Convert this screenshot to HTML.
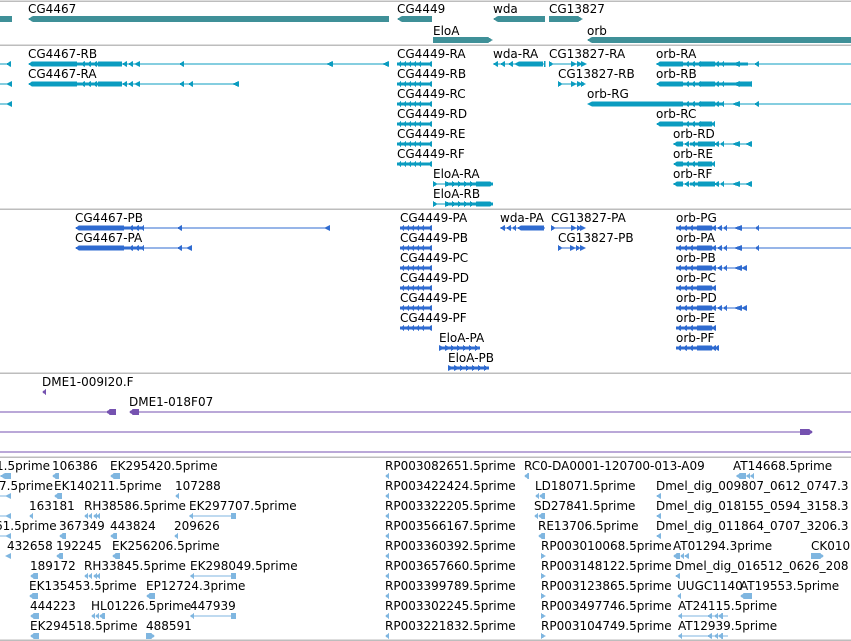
<!DOCTYPE html>
<html><head><meta charset="utf-8"><style>
html,body{margin:0;padding:0;background:#fff;width:851px;height:641px;overflow:hidden}
svg{display:block}
rect,polygon,line{shape-rendering:crispEdges}
text{font-family:"DejaVu Sans","Liberation Sans",sans-serif;font-size:12px;fill:#000}
</style></head><body>
<svg width="851" height="641" viewBox="0 0 851 641" xmlns="http://www.w3.org/2000/svg">
<g stroke="#bdbdbd" stroke-width="1.5">
<line x1="0" y1="1" x2="851" y2="1"/>
<line x1="0" y1="45" x2="851" y2="45"/>
<line x1="0" y1="209" x2="851" y2="209"/>
<line x1="0" y1="373" x2="851" y2="373"/>
<line x1="0" y1="457" x2="851" y2="457"/>
<line x1="0" y1="640" x2="851" y2="640"/>
</g>

<g fill="#3f9098">
<rect x="0" y="16" width="12" height="6"/>
<polygon points="28,19 33,16 389,16 389,22 33,22"/>
<polygon points="397,19 402,16 432,16 432,22 402,22"/>
<polygon points="493,19 498,16 545,16 545,22 498,22"/>
<polygon points="549,16 578,16 583,19 578,22 549,22"/>
<polygon points="433,37 488,37 493,40 488,43 433,43"/>
<polygon points="587,40 592,37 851,37 851,43 592,43"/>
</g>
<text x="28" y="13">CG4467</text>
<text x="397" y="13">CG4449</text>
<text x="493" y="13">wda</text>
<text x="549" y="13">CG13827</text>
<text x="433" y="35">EloA</text>
<text x="587" y="35">orb</text>

<g fill="#0b9cc0" stroke="none">
<rect x="0" y="63.5" width="10" height="1"/><polygon points="6,64 11,61 11,67"/>
<polygon points="28,64 32,61.5 77,61.5 77,66.5 32,66.5"/>
<rect x="77" y="62.5" width="45" height="3"/><rect x="98" y="61.5" width="24" height="5"/>
<polygon points="80,64 85,61 85,67"/><polygon points="86,64 91,61 91,67"/><polygon points="92,64 97,61 97,67"/>
<polygon points="122,64 127,61 127,67"/><polygon points="128,64 133,61 133,67"/><polygon points="134,64 140,61 140,67"/>
<rect x="122" y="63.5" width="267" height="1"/>
<polygon points="179,64 184,61 184,67"/><polygon points="326,64 333,61 333,67"/><polygon points="382,64 389,61 389,67"/>
<rect x="0" y="83.5" width="12" height="1"/><polygon points="6,84 12,81 12,87"/>
<polygon points="28,84 32,81.5 77,81.5 77,86.5 32,86.5"/>
<rect x="77" y="82.5" width="45" height="3"/><rect x="98" y="81.5" width="24" height="5"/>
<polygon points="80,84 85,81 85,87"/><polygon points="86,84 91,81 91,87"/><polygon points="92,84 97,81 97,87"/>
<polygon points="122,84 127,81 127,87"/><polygon points="128,84 133,81 133,87"/><polygon points="134,84 140,81 140,87"/>
<rect x="122" y="83.5" width="116" height="1"/>
<polygon points="179,84 184,81 184,87"/><polygon points="188,84 193,81 193,87"/><polygon points="232,84 239,81 239,87"/>
<rect x="0" y="103.5" width="12" height="1"/><polygon points="6,104 12,101 12,107"/>
</g>
<g fill="#0b9cc0">
<g id="cg49"><rect x="397" y="62.5" width="35" height="3"/>
<polygon points="397,64 401,61 401,67"/><polygon points="402,64 406,61 406,67"/><polygon points="407,64 411,61 411,67"/><polygon points="412,64 416,61 416,67"/><polygon points="417,64 421,61 421,67"/><polygon points="427,64 432,61 432,67"/></g>
<use href="#cg49" y="20"/><use href="#cg49" y="40"/><use href="#cg49" y="60"/><use href="#cg49" y="80"/><use href="#cg49" y="100"/>
<rect x="493" y="63.5" width="52" height="1"/><polygon points="493,64 498,61 498,67"/><polygon points="500,64 505,61 505,67"/><polygon points="508,64 513,61 513,67"/>
<polygon points="514,64 519,61.5 543,61.5 543,66.5 519,66.5"/><rect x="544" y="61" width="1.5" height="6"/>
<rect x="549" y="63.5" width="36" height="1"/><polygon points="549,61 554,64 549,67"/><polygon points="571,61 577,64 571,67"/><polygon points="577,61 583,64 577,67"/><polygon points="581,61 587,64 581,67"/>
<g transform="translate(9,20)"><rect x="549" y="63.5" width="27" height="1"/><polygon points="549,61 554,64 549,67"/><polygon points="562,61 568,64 562,67"/><polygon points="568,61 574,64 568,67"/><polygon points="572,61 577,64 572,67"/></g>
<g id="orbA"><polygon points="656,64 660,61.5 683,61.5 683,66.5 660,66.5"/><rect x="683" y="62.5" width="65" height="3"/>
<rect x="700" y="61.5" width="15" height="5"/>
<polygon points="684,64 689,61 689,67"/><polygon points="690,64 695,61 695,67"/><polygon points="696,64 701,61 701,67"/>
<polygon points="714,64 719,61 719,67"/><polygon points="720,64 724,61 724,67"/><polygon points="731,64 740,61 740,67"/></g>
<rect x="656" y="63.5" width="195" height="1"/><polygon points="754,64 759,61 759,67"/>
<use href="#orbA" y="20"/><polygon points="745,84 752,81 752,87"/><rect x="740" y="81.5" width="12" height="5"/>
<polygon points="587,104 592,101.5 683,101.5 683,106.5 592,106.5"/>
<rect x="683" y="102.5" width="40" height="3"/><rect x="700" y="101.5" width="15" height="5"/>
<polygon points="684,104 689,101 689,107"/><polygon points="690,104 695,101 695,107"/><polygon points="696,104 701,101 701,107"/>
<polygon points="714,104 719,101 719,107"/><polygon points="720,104 724,101 724,107"/><polygon points="731,104 740,101 740,107"/>
<rect x="683" y="103.5" width="168" height="1"/><polygon points="754,104 759,101 759,107"/>
<polygon points="656,124 660,121.5 683,121.5 683,126.5 660,126.5"/><rect x="683" y="122.5" width="32" height="3"/><rect x="700" y="121.5" width="12" height="5"/>
<polygon points="684,124 689,121 689,127"/><polygon points="690,124 695,121 695,127"/><polygon points="696,124 701,121 701,127"/><polygon points="711,124 715,121 715,127"/>
<g id="orbD"><polygon points="673,144 677,141.5 683,141.5 683,146.5 677,146.5"/><rect x="673" y="143.5" width="79" height="1"/>
<polygon points="684,144 689,141 689,147"/><polygon points="690,144 695,141 695,147"/><rect x="690" y="142.5" width="25" height="3"/><rect x="698" y="141.5" width="17" height="5"/>
<polygon points="714,144 719,141 719,147"/><polygon points="720,144 724,141 724,147"/><polygon points="731,144 740,141 740,147"/><polygon points="745,144 752,141 752,147"/></g>
<polygon points="673,164 677,161.5 683,161.5 683,166.5 677,166.5"/><rect x="683" y="162.5" width="32" height="3"/><rect x="698" y="161.5" width="14" height="5"/>
<polygon points="684,164 689,161 689,167"/><polygon points="690,164 695,161 695,167"/><polygon points="711,164 715,161 715,167"/>
<use href="#orbD" y="40"/>
<g id="eloA"><rect x="433" y="183.5" width="60" height="1"/><polygon points="433,181 438,184 433,187"/><rect x="445" y="182.5" width="48" height="3"/>
<polygon points="445,181 452,184 445,187"/><polygon points="452,181 457,184 452,187"/><polygon points="458,181 463,184 458,187"/><polygon points="464,181 469,184 464,187"/><polygon points="470,181 475,184 470,187"/><polygon points="476,181.5 490,181.5 493,184 490,186.5 476,186.5"/></g>
<use href="#eloA" y="20"/>
</g>
<text x="28" y="58">CG4467-RB</text>
<text x="28" y="78">CG4467-RA</text>
<text x="397" y="58">CG4449-RA</text><text x="397" y="78">CG4449-RB</text><text x="397" y="98">CG4449-RC</text>
<text x="397" y="118">CG4449-RD</text><text x="397" y="138">CG4449-RE</text><text x="397" y="158">CG4449-RF</text>
<text x="433" y="178">EloA-RA</text><text x="433" y="198">EloA-RB</text>
<text x="493" y="58">wda-RA</text>
<text x="549" y="58">CG13827-RA</text><text x="558" y="78">CG13827-RB</text>
<text x="656" y="58">orb-RA</text><text x="656" y="78">orb-RB</text><text x="587" y="98">orb-RG</text>
<text x="656" y="118">orb-RC</text><text x="673" y="138">orb-RD</text><text x="673" y="158">orb-RE</text><text x="673" y="178">orb-RF</text>

<g fill="#2f6bd0">
<g id="pb"><polygon points="75,228 79,225.5 124,225.5 124,230.5 79,230.5"/><rect x="124" y="226.5" width="20" height="3"/>
<polygon points="128,228 133,225 133,231"/><polygon points="134,228 139,225 139,231"/><polygon points="140,228 144,225 144,231"/></g>
<rect x="144" y="227.5" width="186" height="1"/><polygon points="177,228 182,225 182,231"/><polygon points="324,228 330,225 330,231"/>
<use href="#pb" y="20"/><rect x="144" y="247.5" width="48" height="1"/><polygon points="177,248 182,245 182,251"/><polygon points="186,248 192,245 192,251"/>
<g id="cgp"><rect x="400" y="226.5" width="32" height="3"/>
<polygon points="400,228 404,225 404,231"/><polygon points="405,228 409,225 409,231"/><polygon points="410,228 414,225 414,231"/><polygon points="415,228 419,225 419,231"/><polygon points="420,228 424,225 424,231"/><polygon points="427,228 432,225 432,231"/></g>
<use href="#cgp" y="20"/><use href="#cgp" y="40"/><use href="#cgp" y="60"/><use href="#cgp" y="80"/><use href="#cgp" y="100"/>
<rect x="500" y="227.5" width="45" height="1"/><polygon points="500,228 505,225 505,231"/><polygon points="506,228 511,225 511,231"/><polygon points="512,228 516,225 516,231"/>
<polygon points="517,228 521,225.5 544,225.5 544,230.5 521,230.5"/>
<rect x="551" y="227.5" width="34" height="1"/><polygon points="551,225 556,228 551,231"/><polygon points="571,225 577,228 571,231"/><polygon points="577,225 582,228 577,231"/><polygon points="580,225 586,228 580,231"/>
<rect x="558" y="247.5" width="27" height="1"/><polygon points="558,245 563,248 558,251"/><polygon points="570,245 576,248 570,251"/><polygon points="576,245 581,248 576,251"/><polygon points="580,245 586,248 580,251"/>
<g id="op"><rect x="676" y="226.5" width="39" height="3"/><rect x="697" y="225.5" width="15" height="5"/>
<polygon points="676,228 681,225 681,231"/><polygon points="682,228 687,225 687,231"/><polygon points="688,228 693,225 693,231"/>
<rect x="676" y="227.5" width="40" height="1"/><polygon points="711,228 716,225 716,231"/></g>
<g id="opl"><use href="#op"/><rect x="715" y="227.5" width="32" height="1"/><polygon points="717,228 722,225 722,231"/><polygon points="723,228 727,225 727,231"/><polygon points="733,228 742,225 742,231"/></g>
<use href="#opl"/><rect x="740" y="227.5" width="111" height="1"/><polygon points="755,228 759,225 759,231"/>
<use href="#opl" y="20"/><rect x="740" y="247.5" width="111" height="1"/><polygon points="755,248 759,245 759,251"/>
<use href="#opl" y="40"/><polygon points="741,268 747,265 747,271"/>
<use href="#op" y="60"/>
<use href="#opl" y="80"/><polygon points="741,308 747,305 747,311"/>
<use href="#op" y="100"/>
<use href="#op" y="120"/><polygon points="714,348 719,345 719,351"/>
<g id="ep"><rect x="439" y="346.5" width="41" height="3"/><polygon points="439,345 445,348 439,351"/><polygon points="445,345 451,348 445,351"/><polygon points="451,345 456,348 451,351"/><polygon points="457,345 462,348 457,351"/><polygon points="463,345 468,348 463,351"/><polygon points="469,345 474,348 469,351"/><polygon points="475,345 480,348 475,351"/></g>
<use href="#ep" x="9" y="20"/>
</g>
<text x="75" y="222">CG4467-PB</text><text x="75" y="242">CG4467-PA</text>
<text x="400" y="222">CG4449-PA</text><text x="400" y="242">CG4449-PB</text><text x="400" y="262">CG4449-PC</text>
<text x="400" y="282">CG4449-PD</text><text x="400" y="302">CG4449-PE</text><text x="400" y="322">CG4449-PF</text>
<text x="439" y="342">EloA-PA</text><text x="448" y="362">EloA-PB</text>
<text x="500" y="222">wda-PA</text><text x="551" y="222">CG13827-PA</text><text x="558" y="242">CG13827-PB</text>
<text x="676" y="222">orb-PG</text><text x="676" y="242">orb-PA</text><text x="676" y="262">orb-PB</text><text x="676" y="282">orb-PC</text>
<text x="676" y="302">orb-PD</text><text x="676" y="322">orb-PE</text><text x="676" y="342">orb-PF</text>

<g fill="#7552b0">
<polygon points="42,392 46,389 46,395"/>
<rect x="0" y="411.5" width="110" height="1"/><polygon points="106,412 110,409 116,409 116,415 110,415"/>
<polygon points="129,412 133,409 139,409 139,415 133,415"/><rect x="139" y="411.5" width="712" height="1"/>
<rect x="0" y="431.5" width="800" height="1"/><polygon points="800,429 809,429 813,432 809,435 800,435"/>
<rect x="0" y="451.5" width="851" height="1"/>
</g>
<text x="42" y="386">DME1-009I20.F</text>
<text x="129" y="406">DME1-018F07</text>

<g fill="#7fb6e0">
<polygon points="0,476 5,473 11,473 11,479 5,479"/><rect x="0" y="475.5" width="8" height="1"/>
<polygon points="52,476 56,473 59,473 59,479 56,479"/>
<polygon points="110,476 114,473 120,473 120,479 114,479"/>
<rect x="0" y="495.5" width="8" height="1"/><polygon points="5,496 11,493 11,499"/>
<polygon points="54,496 58,493 62,493 62,499 58,499"/>
<polygon points="175,496 179,493 179,499"/>
<rect x="0" y="515.5" width="8" height="1"/><polygon points="5,516 11,513 11,519"/>
<polygon points="29,516 33,513 33,519"/>
<polygon points="84,516 88,513 88,519"/><polygon points="88,516 92,513 92,519"/><polygon points="93,516 97,513 97,519"/><polygon points="96,516 100,513 100,519"/>
<rect x="189" y="515.5" width="47" height="1"/><polygon points="189,516 193,513 193,519"/><polygon points="231,513 236,513 236,519 231,519"/>
<rect x="0" y="535.5" width="8" height="1"/><polygon points="5,536 11,533 11,539"/>
<polygon points="59,536 63,533 66,533 66,539 63,539"/><polygon points="110,536 114,533 117,533 117,539 114,539"/><polygon points="174,536 178,533 178,539"/>
<polygon points="5,556 11,553 11,559"/>
<polygon points="56,556 60,553 63,553 63,559 60,559"/><polygon points="112,556 116,553 120,553 120,559 116,559"/>
<polygon points="30,576 34,573 38,573 38,579 34,579"/>
<polygon points="84,576 88,573 88,579"/><polygon points="88,576 92,573 92,579"/><polygon points="93,576 97,573 97,579"/><polygon points="96,576 100,573 100,579"/>
<rect x="190" y="575.5" width="46" height="1"/><polygon points="190,576 194,573 194,579"/><polygon points="231,573 236,573 236,579 231,579"/>
<polygon points="29,596 33,593 38,593 38,599 33,599"/><polygon points="146,596 150,593 155,593 155,599 150,599"/>
<polygon points="30,616 34,613 39,613 39,619 34,619"/>
<polygon points="91,616 95,613 95,619"/><polygon points="95,616 99,613 99,619"/><polygon points="99,616 103,613 105,613 105,619 103,619"/>
<rect x="190" y="615.5" width="46" height="1"/><polygon points="190,616 194,613 194,619"/><polygon points="231,613 236,613 236,619 231,619"/>
<polygon points="30,636 34,633 39,633 39,639 34,639"/><polygon points="146,633 151,633 155,636 151,639 146,639"/>
<polygon points="385,476 389,473 389,479"/><polygon points="385,496 389,493 389,499"/><polygon points="385,516 389,513 389,519"/>
<polygon points="385,536 389,533 389,539"/><polygon points="385,556 389,553 389,559"/><polygon points="385,576 389,573 389,579"/>
<polygon points="385,596 389,593 389,599"/><polygon points="385,616 389,613 389,619"/><polygon points="385,636 389,633 389,639"/>
<polygon points="524,476 528,473 529,473 529,479 528,479"/>
<polygon points="535,496 539,493 539,499"/><polygon points="539,496 543,493 545,493 545,499 543,499"/>
<polygon points="534,516 538,513 538,519"/><polygon points="538,516 542,513 545,513 545,519 542,519"/>
<polygon points="538,536 542,533 545,533 545,539 542,539"/>
<polygon points="541,553 546,556 541,559"/><polygon points="541,573 546,576 541,579"/><polygon points="541,593 546,596 541,599"/>
<polygon points="541,613 546,616 541,619"/><polygon points="541,633 546,636 541,639"/>
<polygon points="736,476 740,473 746,473 746,479 740,479"/><polygon points="746,476 750,473 750,479"/><polygon points="750,476 754,473 754,479"/><rect x="736" y="475.5" width="18" height="1"/>
<polygon points="656,496 661,493 661,499"/><polygon points="656,516 661,513 661,519"/><polygon points="656,536 661,533 661,539"/>
<polygon points="673,556 677,553 680,553 680,559 677,559"/><polygon points="680,556 684,553 684,559"/><polygon points="684,556 689,553 689,559"/>
<polygon points="811,553 820,553 824,556 820,559 811,559"/>
<polygon points="675,576 680,573 680,579"/>
<polygon points="677,596 681,593 681,599"/>
<polygon points="740,596 744,593 752,593 752,599 744,599"/>
<rect x="678" y="615.5" width="50" height="1"/><polygon points="678,616 682,613 682,619"/><polygon points="707,616 712,613 712,619"/><polygon points="714,616 718,613 718,619"/><polygon points="718,616 722,613 723,613 723,619 722,619"/>
<rect x="678" y="635.5" width="50" height="1"/><polygon points="678,636 682,633 682,639"/><polygon points="707,636 712,633 712,639"/><polygon points="714,636 718,633 718,639"/><polygon points="718,636 722,633 723,633 723,639 722,639"/>
</g>
<g>
<text x="-4" y="470">1.5prime</text><text x="52" y="470">106386</text><text x="110" y="470">EK295420.5prime</text>
<text x="-1" y="490">7.5prime</text><text x="54" y="490">EK140211.5prime</text><text x="175" y="490">107288</text>
<text x="29" y="510">163181</text><text x="84" y="510">RH38586.5prime</text><text x="189" y="510">EK297707.5prime</text>
<text x="-5" y="530">61.5prime</text><text x="59" y="530">367349</text><text x="110" y="530">443824</text><text x="174" y="530">209626</text>
<text x="7" y="550">432658</text><text x="56" y="550">192245</text><text x="112" y="550">EK256206.5prime</text>
<text x="30" y="570">189172</text><text x="84" y="570">RH33845.5prime</text><text x="190" y="570">EK298049.5prime</text>
<text x="29" y="590">EK135453.5prime</text><text x="146" y="590">EP12724.3prime</text>
<text x="30" y="610">444223</text><text x="91" y="610">HL01226.5prime</text><text x="190" y="610">447939</text>
<text x="30" y="630">EK294518.5prime</text><text x="146" y="630">488591</text>
<text x="385" y="470">RP003082651.5prime</text><text x="524" y="470">RC0-DA0001-120700-013-A09</text><text x="733" y="470">AT14668.5prime</text>
<text x="385" y="490">RP003422424.5prime</text><text x="535" y="490">LD18071.5prime</text><text x="656" y="490">Dmel_dig_009807_0612_0747.3</text>
<text x="385" y="510">RP003322205.5prime</text><text x="534" y="510">SD27841.5prime</text><text x="656" y="510">Dmel_dig_018155_0594_3158.3</text>
<text x="385" y="530">RP003566167.5prime</text><text x="538" y="530">RE13706.5prime</text><text x="656" y="530">Dmel_dig_011864_0707_3206.3</text>
<text x="385" y="550">RP003360392.5prime</text><text x="541" y="550">RP003010068.5prime</text><text x="673" y="550">AT01294.3prime</text><text x="811" y="550">CK010</text>
<text x="385" y="570">RP003657660.5prime</text><text x="541" y="570">RP003148122.5prime</text><text x="675" y="570">Dmel_dig_016512_0626_208</text>
<text x="385" y="590">RP003399789.5prime</text><text x="541" y="590">RP003123865.5prime</text><text x="677" y="590">UUGC1140</text><text x="740" y="590">AT19553.5prime</text>
<text x="385" y="610">RP003302245.5prime</text><text x="541" y="610">RP003497746.5prime</text><text x="678" y="610">AT24115.5prime</text>
<text x="385" y="630">RP003221832.5prime</text><text x="541" y="630">RP003104749.5prime</text><text x="678" y="630">AT12939.5prime</text>
</g>
</svg>
</body></html>
